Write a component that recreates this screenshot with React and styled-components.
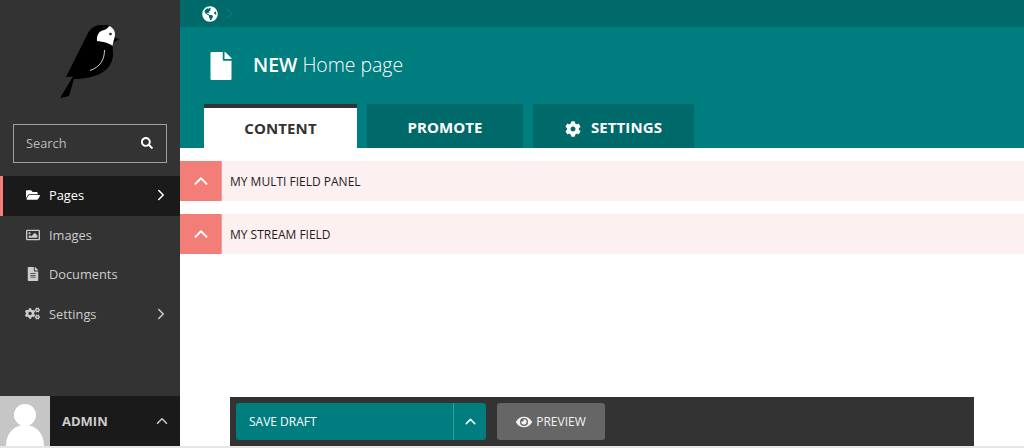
import React from 'react';
import styled, { createGlobalStyle } from 'styled-components';
import { FaFolderOpen, FaRegImage, FaFileAlt, FaCogs, FaSearch, FaGlobeAmericas, FaFile, FaCog, FaEye } from 'react-icons/fa';
import { FiChevronRight, FiChevronUp } from 'react-icons/fi';

const GlobalStyle = createGlobalStyle`
  html, body { margin: 0; padding: 0; background: #fff; }
  body { font-family: "Open Sans", "Liberation Sans", sans-serif; }
  * { box-sizing: border-box; }
`;

const Page = styled.div`
  position: relative;
  display: flex;
  width: 1024px;
  height: 448px;
  overflow: hidden;
  border-bottom: 2px solid #e6e6e6;
`;

const Sidebar = styled.aside`
  display: flex;
  flex-direction: column;
  width: 180px;
  flex: none;
  background: #333;
`;

const LogoWrap = styled.div`
  display: flex;
  height: 124px;
  padding: 22px 0 0 58px;
`;

const SearchBox = styled.div`
  display: flex;
  align-items: center;
  justify-content: space-between;
  height: 39px;
  margin: 0 13px 13px;
  padding: 0 13px 1px 12px;
  border: 1px solid #a0a0a0;
  color: #bbb;
  font-size: 12.800px;
  svg { color: #fff; font-size: 12px; }
`;

const NavItem = styled.div`
  display: flex;
  align-items: center;
  height: 39.5px;
  padding-bottom: 1px;
  padding-left: ${({ $active }) => ($active ? '22px' : '25px')};
  background: ${({ $active }) => ($active ? '#1a1a1a' : 'transparent')};
  border-left: ${({ $active }) => ($active ? '3px solid #f37e77' : '0')};
  color: ${({ $active }) => ($active ? '#fff' : '#ccc')};
  font-size: 12.800px;
  font-weight: ${({ $active }) => ($active ? 500 : 400)};
`;

const NavIcon = styled.span`
  display: flex;
  justify-content: center;
  width: 15px;
  margin-right: 9px;
  font-size: ${({ $size }) => $size || 14}px;
`;

const NavLabel = styled.span`
  flex: 1;
`;

const NavChevron = styled(FiChevronRight)`
  margin-right: 10px;
  font-size: 18px;
`;

const UserRow = styled.div`
  display: flex;
  align-items: center;
  height: 50px;
  margin-top: auto;
  background: #1a1a1a;
  color: #ccc;
`;

const Avatar = styled.svg`
  display: block;
  width: 50px;
  height: 50px;
  background: #c6c6c6;
`;

const UserName = styled.span`
  flex: 1;
  padding-left: 12px;
  font-size: 13px;
  font-weight: 700;
`;

const UserChevron = styled(FiChevronUp)`
  margin-right: 9px;
  font-size: 18px;
`;

const Main = styled.main`
  display: flex;
  flex-direction: column;
  flex: 1;
  min-width: 0;
`;

const Breadcrumb = styled.div`
  display: flex;
  align-items: center;
  gap: 3px;
  height: 27px;
  padding-left: 22px;
  background: #006a6b;
  color: #fff;
  font-size: 16px;
`;

const CrumbChevron = styled(FiChevronRight)`
  color: #007d7e;
  font-size: 17px;
`;

const Header = styled.header`
  display: flex;
  flex-direction: column;
  height: 121px;
  padding-left: 24px;
  background: #007d7e;
  color: #fff;
`;

const TitleRow = styled.div`
  display: flex;
  align-items: center;
  height: 77px;
  padding: 0 0 2px 3px;
  svg { margin-top: 2px; font-size: 28px; }
`;

const Title = styled.h1`
  margin: 0 0 0 18px;
  font-size: 19.400px;
  font-weight: 300;
  line-height: 1;
  b { font-weight: 600; }
`;

const Tabs = styled.div`
  display: flex;
  gap: 10px;
`;

const Tab = styled.div`
  display: flex;
  align-items: center;
  justify-content: center;
  gap: 10px;
  width: ${({ $width }) => $width}px;
  height: 44px;
  padding-top: ${({ $active }) => ($active ? '0' : '2px')};
  background: ${({ $active }) => ($active ? '#fff' : '#006a6b')};
  border-top: ${({ $active }) => ($active ? '4px solid #333' : '0')};
  color: ${({ $active }) => ($active ? '#333' : '#fff')};
  font-size: 15px;
  font-weight: 700;
  letter-spacing: 0.1px;
  svg { margin-top: 3px; font-size: 16px; }
`;

const Panels = styled.div`
  display: flex;
  flex-direction: column;
  gap: 13px;
  padding-top: 13px;
`;

const Panel = styled.div`
  display: flex;
  align-items: center;
  height: 40px;
  background: #fcf1f0;
  color: #2a1a1a;
  font-size: 12px;
`;

const PanelToggle = styled.div`
  display: flex;
  align-items: center;
  justify-content: center;
  width: 42px;
  height: 100%;
  margin-right: 8px;
  background: #f37e77;
  border-right: 1px solid #f69a94;
  color: #fff;
  font-size: 22px;
`;

const ActionBar = styled.div`
  position: absolute;
  left: 230px;
  bottom: 0;
  display: flex;
  align-items: center;
  gap: 11px;
  width: 744px;
  height: 49px;
  padding: 0 6px;
  background: #333;
  font-size: 12px;
`;

const SaveGroup = styled.div`
  display: flex;
  width: 250px;
  height: 37px;
  border-radius: 3px;
  background: #007d7e;
  color: #fff;
`;

const SaveLabel = styled.span`
  display: flex;
  align-items: center;
  flex: 1;
  padding-left: 13px;
`;

const SaveToggle = styled.span`
  display: flex;
  align-items: center;
  justify-content: center;
  width: 33px;
  border-left: 1px solid #3b9a9b;
  font-size: 17px;
`;

const PreviewButton = styled.div`
  display: flex;
  align-items: center;
  justify-content: center;
  gap: 4px;
  width: 108px;
  height: 37px;
  border-radius: 3px;
  background: #666;
  color: #f2f2f2;
  svg { font-size: 16px; }
`;

const Logo = () => (
  <svg width="64" height="78" viewBox="58 22 64 78">
    <path fill="#000" d="M101 25 C95 25 91 28 88 33 L66 77 L73 76.500 L60 98 L69 96 L74 79 C92 79 113 73 113 54 L112.500 43 L119 39.500 L114 37 L109 25 C106 25 104 25 101 25 Z" />
    <path fill="#fff" d="M97 41 C96.500 35 99 31 104 30 C106 29.500 108 28 109 26 C112 27 115 30 115 34 C115 38 113.500 40 112.500 46 C109 42.500 103 42 97 41 Z" />
    <circle cx="110.500" cy="34" r="1.300" fill="#222" />
    <path fill="none" stroke="#fff" strokeWidth="0.8" d="M104.500 50 C104.500 60 100 67 90 70.500" />
  </svg>
);

export default function App() {
  return (
    <Page>
      <GlobalStyle />
      <Sidebar>
        <LogoWrap><Logo /></LogoWrap>
        <SearchBox>Search<FaSearch /></SearchBox>
        <NavItem $active>
          <NavIcon><FaFolderOpen /></NavIcon>
          <NavLabel>Pages</NavLabel>
          <NavChevron />
        </NavItem>
        <NavItem>
          <NavIcon><FaRegImage /></NavIcon>
          <NavLabel>Images</NavLabel>
        </NavItem>
        <NavItem>
          <NavIcon><FaFileAlt /></NavIcon>
          <NavLabel>Documents</NavLabel>
        </NavItem>
        <NavItem>
          <NavIcon $size={15}><FaCogs /></NavIcon>
          <NavLabel>Settings</NavLabel>
          <NavChevron />
        </NavItem>
        <UserRow>
          <Avatar viewBox="0 0 50 50">
            <circle cx="25" cy="19" r="11" fill="#fff" />
            <path fill="#fff" d="M6 50 C6 37 14 29 25 29 C36 29 44 37 44 50 Z" />
          </Avatar>
          <UserName>ADMIN</UserName>
          <UserChevron />
        </UserRow>
      </Sidebar>
      <Main>
        <Breadcrumb>
          <FaGlobeAmericas />
          <CrumbChevron />
        </Breadcrumb>
        <Header>
          <TitleRow>
            <FaFile />
            <Title><b>NEW</b> Home page</Title>
          </TitleRow>
          <Tabs>
            <Tab $active $width={153}>CONTENT</Tab>
            <Tab $width={156}>PROMOTE</Tab>
            <Tab $width={161}><FaCog />SETTINGS</Tab>
          </Tabs>
        </Header>
        <Panels>
          <Panel><PanelToggle><FiChevronUp /></PanelToggle>MY MULTI FIELD PANEL</Panel>
          <Panel><PanelToggle><FiChevronUp /></PanelToggle>MY STREAM FIELD</Panel>
        </Panels>
      </Main>
      <ActionBar>
        <SaveGroup>
          <SaveLabel>SAVE DRAFT</SaveLabel>
          <SaveToggle><FiChevronUp /></SaveToggle>
        </SaveGroup>
        <PreviewButton><FaEye />PREVIEW</PreviewButton>
      </ActionBar>
    </Page>
  );
}
